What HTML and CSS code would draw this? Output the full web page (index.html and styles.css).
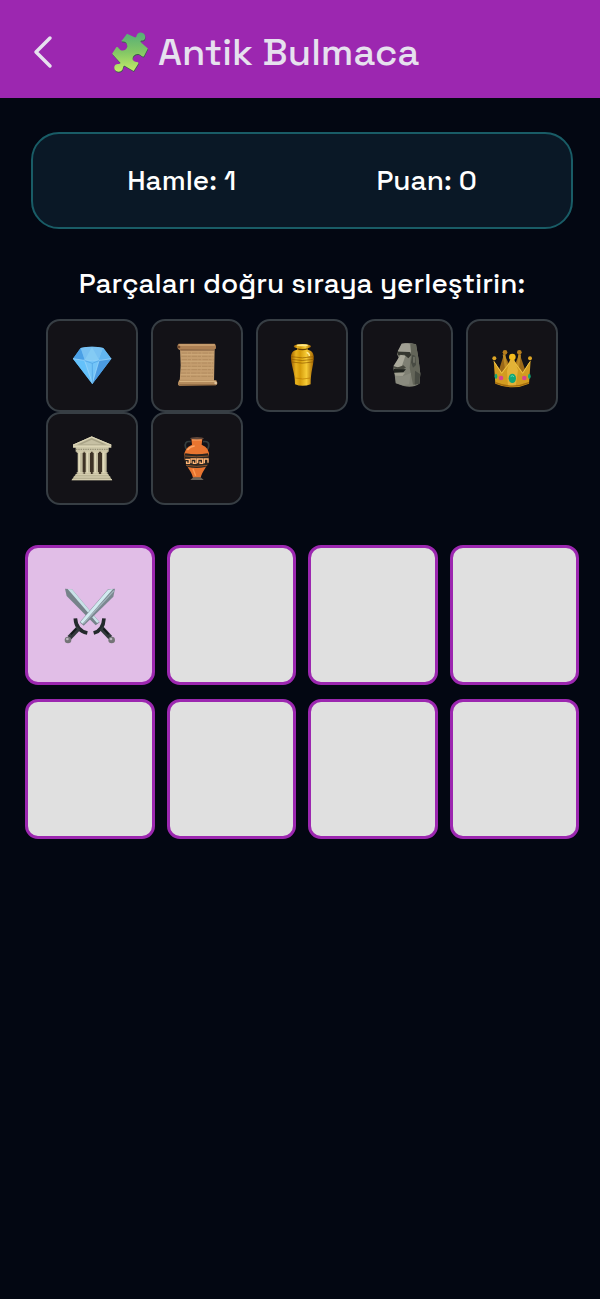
FILE: index.html
```html
<!DOCTYPE html>
<html lang="tr">

<head>
    <meta charset="UTF-8">
    <meta name="viewport" content="width=device-width, initial-scale=1.0">
    <title>Antik Bulmaca</title>
    <link rel="stylesheet" href="styles.css">
</head>

<body>
    <header class="app-bar">
        <button class="back" type="button" aria-label="Geri">
            <svg class="back-icon" viewBox="0 0 20 36" aria-hidden="true">
                <path d="M17 4 3 18l14 14" fill="none" stroke="currentColor" stroke-width="3.5" stroke-linecap="round" stroke-linejoin="round" />
            </svg>
        </button>
        <h1 class="title">
            <svg class="title-icon" viewBox="330 90 120 130" aria-hidden="true">
                <defs>
                    <linearGradient id="puzzle" x1="0" y1="0" x2="0" y2="1">
                        <stop offset="0" stop-color="#55ad78" />
                        <stop offset=".5" stop-color="#83c765" />
                        <stop offset="1" stop-color="#c5ed68" />
                    </linearGradient>
                    <path id="jigsaw" d="M381 98 404 109C411 111 408 103 413 98C420 92 432 95 435 103C438 112 434 119 426 119C420 119 421 124 426 127L444 143 432 166C427 170 424 163 419 161C410 157 399 163 398 172C397 181 405 184 412 184C417 185 416 189 413 192L401 211 375 196C369 193 370 201 367 207C362 215 349 215 344 207C340 198 345 189 355 190C362 190 363 186 358 183L336 159 348 140C353 135 356 144 362 148C370 152 381 146 382 137C382 127 376 121 367 122C362 122 364 119 368 116Z" />
                </defs>
                <use href="#jigsaw" fill="#3c5d52" transform="translate(1 3)" />
                <use href="#jigsaw" fill="url(#puzzle)" />
            </svg>
            Antik Bulmaca
        </h1>
    </header>

    <main class="game">
        <section class="stats">
            <span>Hamle: 1</span>
            <span>Puan: 0</span>
        </section>

        <h2 class="prompt">Parçaları doğru sıraya yerleştirin:</h2>

        <div class="pieces">
            <button class="piece" type="button" aria-label="Elmas">
                <svg class="piece-icon" viewBox="26 20 144 144" aria-hidden="true">
                    <path d="M64 38Q98 30 132 38L156 70 99 146 41 70Z" fill="#58b2f4" />
                    <path d="M64 38 76 74 41 70Z" fill="#4aa0e6" />
                    <path d="M64 38Q98 30 132 38L119 74H76Z" fill="#78c1f2" />
                    <path d="M132 38 156 70 119 74Z" fill="#62b6f0" />
                    <path d="M98 35 119 74H76Z" fill="#84cbf4" />
                    <path d="M41 70 76 76 99 146Z" fill="#64c1fa" />
                    <path d="M76 76H119L99 146Z" fill="#74c5f8" />
                    <path d="M119 76 156 70 99 146Z" fill="#4b9ce3" />
                    <path d="M41 70Q98 82 156 70M76 76 99 144 119 76" fill="none" stroke="#a4dbfa" stroke-width="2" />
                    <path d="M76 76 99 84 119 76M99 84V144" fill="none" stroke="#4a9fe3" stroke-width="2" />
                </svg>
            </button>
            <button class="piece" type="button" aria-label="Parşömen">
                <svg class="piece-icon" viewBox="26 20 144 144" aria-hidden="true">
                    <path d="M47 40H151L149 139H46L49 90Z" fill="#c49d6e" />
                    <path d="M52 53H148M51 63H147M52 73H148M50 83H147M51 93H147M50 103H147M49 113H146M49 123H146" stroke="#a98358" stroke-width="2" stroke-dasharray="17 2 9 3" />
                    <path d="M52 58H148M51 78H147M50 98H147M49 118H146" stroke="#d0ad7d" stroke-width="2" />
                    <path d="M43 25H151Q157 30 154 41L46 44Q37 41 40 29Z" fill="#ad8054" />
                    <path d="M46 29H150" stroke="#cda474" stroke-width="4" stroke-linecap="round" />
                    <path d="M48 44H150" stroke="#795536" stroke-width="3" />
                    <path d="M45 133 156 135Q161 142 157 149L46 152Q39 149 41 142Z" fill="#b48b5d" />
                    <path d="M46 138H153" stroke="#d6b27f" stroke-width="4" stroke-linecap="round" />
                    <path d="M45 149H155" stroke="#7c5837" stroke-width="3" />
                    <circle cx="154" cy="143" r="4" fill="#ddc4a1" />
                    <circle cx="44" cy="35" r="4" fill="#70492e" />
                </svg>
            </button>
            <button class="piece" type="button" aria-label="Altın vazo">
                <svg class="piece-icon" viewBox="24 20 144 144" aria-hidden="true">
                    <defs>
                        <linearGradient id="gold">
                            <stop offset="0" stop-color="#9c5d00" />
                            <stop offset=".22" stop-color="#e8b31f" />
                            <stop offset=".4" stop-color="#d59b0a" />
                            <stop offset=".68" stop-color="#f6cb35" />
                            <stop offset="1" stop-color="#a66500" />
                        </linearGradient>
                    </defs>
                    <path d="M81 38H113V43C126 46 132 54 131 68C130 94 122 108 122 147Q97 156 75 147C75 111 64 94 63 68C62 54 68 46 81 43Z" fill="url(#gold)" />
                    <path d="M63 64Q97 71 131 64M63 72Q97 79 131 72M65 80Q97 87 129 80" fill="none" stroke="#8f5a00" stroke-width="2" />
                    <path d="M76 128Q97 134 122 128" fill="none" stroke="#b97800" stroke-width="2" />
                    <path d="M82 40Q97 45 113 40" fill="none" stroke="#684100" stroke-width="4" />
                    <ellipse cx="97" cy="33" rx="26" ry="7" fill="url(#gold)" />
                    <ellipse cx="97" cy="30" rx="17" ry="3" fill="#ffe887" />
                    <path d="M110 51Q119 55 118 62" fill="none" stroke="#fff0a0" stroke-width="4" />
                </svg>
            </button>
            <button class="piece" type="button" aria-label="Moai">
                <svg class="piece-icon" viewBox="23 20 144 144" aria-hidden="true">
                    <path d="M79 25Q100 20 122 27L129 67 135 116 132 145Q114 158 85 152L61 144 58 118 54 98 70 67 65 56Z" fill="#7f8074" />
                    <path d="M79 25Q91 22 103 25L108 51 67 48Z" fill="#a09f93" />
                    <path d="M106 25 122 27 129 67 135 116 132 145 113 148 103 97 107 59Z" fill="#636559" />
                    <path d="M65 49 103 50 108 59 99 69 87 58 69 60Z" fill="#34362f" />
                    <path d="M76 58 90 62 80 91Q66 100 54 93Z" fill="#aaa99b" />
                    <path d="M55 93Q71 99 84 90L92 97 83 102 58 100Z" fill="#47483f" />
                    <path d="M56 101 92 102 84 111 56 113Z" fill="#1e211d" />
                    <path d="M57 112 89 112 82 122 60 121Z" fill="#a09f91" />
                    <path d="M60 122 82 123 107 113 101 147 81 150 62 143Z" fill="#898a7e" />
                    <path d="M111 58 120 62 122 89 113 97 107 81Z" fill="#484b43" />
                    <path d="M116 64V82" stroke="#7d7e72" stroke-width="4" />
                    <path d="M119 106 134 116 132 145 118 148Z" fill="#484b43" />
                </svg>
            </button>
            <button class="piece" type="button" aria-label="Taç">
                <svg class="piece-icon" viewBox="36 20 144 144" aria-hidden="true">
                    <path d="M65 117 84 56 108 103 131 56 152 117Z" fill="#9b6818" />
                    <path d="M84 57 93 112M131 57 123 112" stroke="#be8b25" stroke-width="8" />
                    <circle cx="87" cy="51" r="7" fill="#b67d1d" />
                    <circle cx="130" cy="51" r="7" fill="#b67d1d" />
                    <path d="M53 75 77 111 99 81 108 70 119 81 140 111 164 75 159 145Q109 167 58 145Z" fill="#d29c20" />
                    <path d="M102 73H115L126 104 119 153H96L93 106Z" fill="#e3b237" />
                    <path d="M54 79 77 114 100 84M118 84 140 114 162 79" fill="none" stroke="#edc34a" stroke-width="3" />
                    <path d="M58 142Q109 163 159 142" fill="none" stroke="#a36a0d" stroke-width="4" />
                    <circle cx="55" cy="69" r="6" fill="#dda526" />
                    <circle cx="162" cy="69" r="6" fill="#dda526" />
                    <circle cx="109" cy="65" r="10" fill="#f4bb1d" />
                    <ellipse cx="109" cy="129" rx="11" ry="14" fill="#10a778" />
                    <path d="M104 124Q108 118 114 124" fill="none" stroke="#60dab0" stroke-width="3" />
                    <circle cx="75" cy="128" r="7" fill="#d9468c" />
                    <circle cx="145" cy="128" r="7" fill="#d9468c" />
                    <ellipse cx="60" cy="123" rx="4" ry="8" fill="#12a676" />
                    <ellipse cx="160" cy="123" rx="4" ry="8" fill="#12a676" />
                </svg>
            </button>
            <button class="piece" type="button" aria-label="Tapınak">
                <svg class="piece-icon" viewBox="26 14 144 144" aria-hidden="true">
                    <path d="M58 60H139V133H58Z" fill="#3d3225" />
                    <path d="M97 18 156 43V52H148V64H49V52H41V43Z" fill="#cbc5a7" />
                    <path d="M97 23 143 43H53Z" fill="#a8a286" />
                    <path d="M97 28 129 42H67Z" fill="#c6c0a3" />
                    <path d="M41 44 97 20 156 44M42 49H155" fill="none" stroke="#ded7b8" stroke-width="3" />
                    <path d="M50 57H147" stroke="#8f896f" stroke-width="3" stroke-dasharray="4 3" />
                    <path d="M55 63H70V130H55ZM79 63H92V130H79ZM103 63H116V130H103ZM128 63H142V130H128Z" fill="#c1bb9d" />
                    <path d="M60 66V128M84 66V128M108 66V128M133 66V128" stroke="#e2dbbc" stroke-width="5" />
                    <path d="M52 65H73M76 65H95M100 65H119M125 65H145M52 128H73M76 128H95M100 128H119M125 128H145" stroke="#d6cfb0" stroke-width="4" />
                    <path d="M50 131H146L159 150H36Z" fill="#b8b294" />
                    <path d="M49 133H147M43 140H153M38 148H158" stroke="#d9d2b3" stroke-width="3" />
                </svg>
            </button>
            <button class="piece" type="button" aria-label="Amfora">
                <svg class="piece-icon" viewBox="26 14 144 144" aria-hidden="true">
                    <path d="M79 34Q58 31 64 52L71 64M116 34Q138 31 132 52L125 64" fill="none" stroke="#343d3d" stroke-width="5" />
                    <path d="M81 25H114L112 43Q137 52 134 80C132 108 114 121 109 142H86C82 121 62 108 60 80Q58 52 83 43Z" fill="#e87530" />
                    <path d="M63 69Q97 75 131 69L134 78 133 101 123 110Q97 116 70 110L62 98 60 78Z" fill="#292521" />
                    <path d="M62 77Q97 82 132 77M65 105Q97 111 129 105" fill="none" stroke="#bd692d" stroke-width="2" />
                    <path d="M63 87H75V99H67V93M80 99V86H95V99H87V93M100 99V86H115V99H107V93M120 99V86H131V97" fill="none" stroke="#ffb576" stroke-width="4" />
                    <path d="M69 59Q78 48 91 47" fill="none" stroke="#ffa564" stroke-width="5" />
                    <path d="M86 115 94 136" stroke="#ff9b52" stroke-width="4" />
                    <ellipse cx="98" cy="24" rx="21" ry="4" fill="#60473a" />
                    <path d="M83 29H112" stroke="#f7a364" stroke-width="3" />
                    <path d="M87 141H109L118 149H78Z" fill="#6d6459" />
                </svg>
            </button>
        </div>

        <div class="board">
            <button class="cell cell-filled" type="button" aria-label="1. kare: Kılıçlar">
                <svg class="cell-icon" viewBox="28 30 180 180" aria-hidden="true">
                    <path d="M43 41 64 43 147 142 135 151 48 63Z" fill="#76828a" />
                    <path d="M51 42 64 43 146 141 139 144Z" fill="#c9e1e8" />
                    <path d="M129 174Q158 166 160 130" fill="none" stroke="#23292c" stroke-width="11" />
                    <path d="M152 159 179 188" stroke="#31383b" stroke-width="15" />
                    <path d="M158 161 174 178" stroke="#14191b" stroke-width="5" />
                    <circle cx="183" cy="195" r="10" fill="#747477" />
                    <circle cx="181" cy="192" r="4" fill="#bbb7bf" />
                    <path d="M193 41 172 43 87 142 99 152 188 65Z" fill="#7b8790" />
                    <path d="M187 42 172 44 89 141 96 146Z" fill="#d2eaf0" />
                    <path d="M190 47 98 146" stroke="#a3b6be" stroke-width="4" />
                    <path d="M74 130Q76 166 110 174" fill="none" stroke="#23292c" stroke-width="11" />
                    <path d="M84 159 56 188" stroke="#31383b" stroke-width="15" />
                    <path d="M77 161 61 178" stroke="#14191b" stroke-width="5" />
                    <circle cx="52" cy="195" r="10" fill="#747477" />
                    <circle cx="50" cy="192" r="4" fill="#bbb7bf" />
                </svg>
            </button>
            <button class="cell" type="button" aria-label="2. kare"></button>
            <button class="cell" type="button" aria-label="3. kare"></button>
            <button class="cell" type="button" aria-label="4. kare"></button>
            <button class="cell" type="button" aria-label="5. kare"></button>
            <button class="cell" type="button" aria-label="6. kare"></button>
            <button class="cell" type="button" aria-label="7. kare"></button>
            <button class="cell" type="button" aria-label="8. kare"></button>
        </div>
    </main>
</body>

</html>
```
FILE: styles.css
```css
* {
    box-sizing: border-box;
}

body {
    margin: 0;
    min-height: 100vh;
    background-color: #030712;
    color: #fff;
    font-family: "Space Grotesk", Inter, sans-serif;
}

button {
    padding: 0;
    font: inherit;
    color: inherit;
    cursor: pointer;
}

.app-bar {
    display: flex;
    align-items: center;
    gap: 44px;
    padding: 6px 20px 0;
    height: 98px;
    background-color: #9c27b0;
    color: #e6e1ee;
}

.back {
    display: flex;
    align-items: center;
    justify-content: center;
    width: 46px;
    height: 48px;
    border: 0;
    background: none;
}

.back-icon {
    width: 20px;
    height: 36px;
}

.title {
    display: flex;
    align-items: center;
    gap: 8px;
    margin: 0;
    font-size: 38px;
    font-weight: 500;
    line-height: 48px;
}

.title-icon {
    width: 40px;
    height: 43px;
}

.game {
    padding: 34px 21px 0 25px;
}

.stats {
    display: flex;
    justify-content: space-around;
    align-items: center;
    margin: 0 6px;
    padding: 0 24px 2px;
    height: 97px;
    border: 2px solid #195c66;
    border-radius: 28px;
    background-color: #0a1826;
    font-size: 28px;
    font-weight: 500;
}

.prompt {
    margin: 35px 0 17px;
    font-size: 28px;
    font-weight: 500;
    line-height: 38px;
    text-align: center;
}

.pieces {
    display: flex;
    flex-wrap: wrap;
    column-gap: 13px;
    padding: 0 21px;
}

.piece {
    display: flex;
    align-items: center;
    justify-content: center;
    width: 92px;
    height: 93px;
    border: 2px solid #373e44;
    border-radius: 14px;
    background-color: #131217;
}

.piece-icon {
    width: 48px;
    height: 48px;
}

.board {
    display: grid;
    grid-template-columns: repeat(4, 1fr);
    gap: 14px 12px;
    margin-top: 40px;
}

.cell {
    display: flex;
    align-items: center;
    justify-content: center;
    height: 140px;
    border: 3px solid #9c27b0;
    border-radius: 13px;
    background-color: #e0e0e0;
}

.cell-filled {
    background-color: #e1bee7;
}

.cell-icon {
    width: 60px;
    height: 60px;
}
```
